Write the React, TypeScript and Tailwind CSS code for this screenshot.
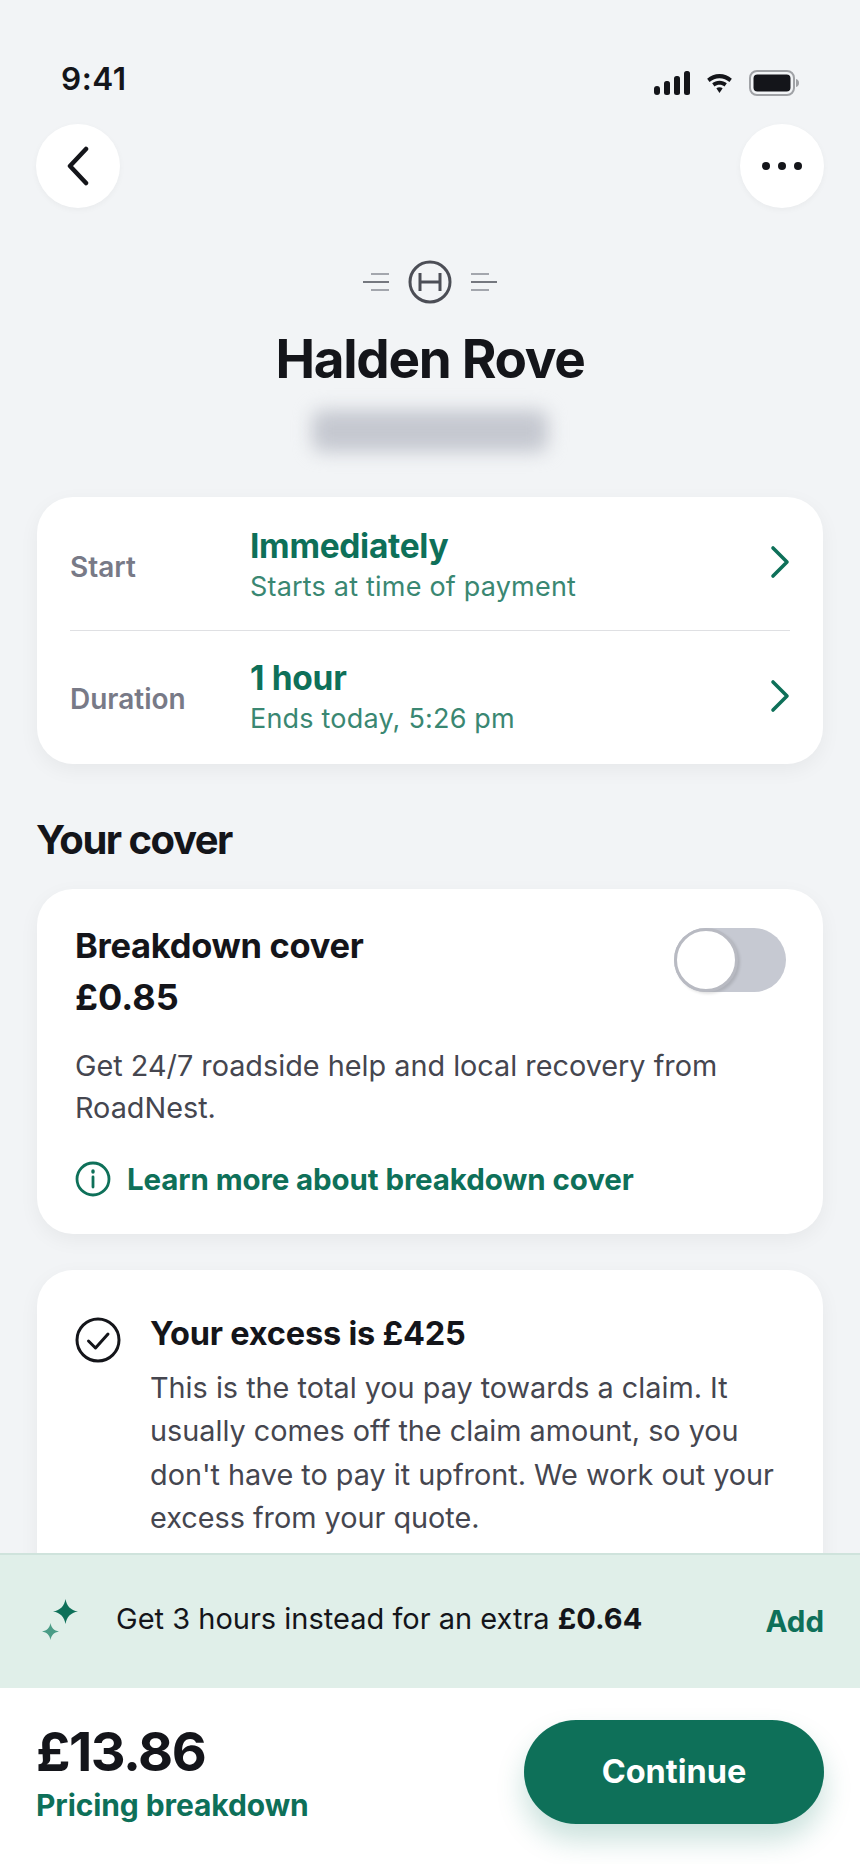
import React from "react";

const Chevron = () => (
  <svg width="20" height="34" viewBox="0 0 20 34" fill="none" className="mb-[4px] shrink-0">
    <path d="M3 3l14 14L3 31" stroke="#0e7059" strokeWidth="3.600" strokeLinecap="round" strokeLinejoin="round" />
  </svg>
);

const Sparkle = ({ size, color }: { size: number; color: string }) => (
  <svg width={size} height={size} viewBox="0 0 24 24" fill={color}>
    <path d="M12 0c1.200 6.800 4.800 10.800 12 12-7.200 1.200-10.800 5.200-12 12-1.200-6.800-4.800-10.800-12-12 7.200-1.200 10.800-5.200 12-12z" />
  </svg>
);

const Lines = ({ flip }: { flip?: boolean }) => (
  <svg width="26" height="20" viewBox="0 0 26 20" className={flip ? "-scale-x-100" : ""}>
    <path d="M8 2h18M8 18h18" stroke="#a3a6ad" strokeWidth="2" />
    <path d="M0 10h26" stroke="#75787f" strokeWidth="2" />
  </svg>
);

function Row({ label, title, sub, first }: { label: string; title: string; sub: string; first?: boolean }) {
  return (
    <div className="flex items-center h-[133px]">
      <div className={`w-[180px] shrink-0 text-[28px] font-semibold text-[#787a87] ${first ? "pt-[6px]" : "pt-[2px]"}`}>{label}</div>
      <div className={`flex-1 ${first ? "pt-[4px]" : ""}`}>
        <div className="text-[33.500px] leading-[40px] font-bold tracking-[-0.3px] text-[#0e7059]">{title}</div>
        <div className="mt-[1px] text-[27px] leading-[39px] tracking-[0.2px] text-[#3a8772]">{sub}</div>
      </div>
      <Chevron />
    </div>
  );
}

export default function App() {
  return (
    <div className="w-[860px] h-[1864px] flex flex-col overflow-hidden bg-[#f2f4f6] font-['Inter',sans-serif] text-[#14151a]">
      <div className="flex-1 min-h-0 overflow-hidden px-[37px]">
        <div className="flex items-start justify-between h-[124px] pl-[24px] pr-[24px] pt-[60px]">
          <div className="text-[31.500px] leading-[38px] font-semibold tracking-[0.5px]">9:41</div>
          <div className="flex items-center gap-[17px] pt-[10px]">
            <svg width="36" height="24" viewBox="0 0 36 24" fill="#14151a">
              <rect x="0" y="15" width="6" height="9" rx="3" />
              <rect x="10" y="10" width="6" height="14" rx="2.500" />
              <rect x="20" y="5" width="6" height="19" rx="2.500" />
              <rect x="30" y="0" width="6" height="24" rx="2.500" />
            </svg>
            <svg width="25" height="19" viewBox="0 0 26 20" fill="#14151a">
              <path d="M13 0c5 0 9.500 2 13 5l-2.500 3.500C20.500 6 17 4.500 13 4.500S5.500 6 2.500 8.500L0 5c3.500-3 8-5 13-5z" />
              <path d="M13 7c3 0 5.500 1 7.700 2.800l-2.400 3.400c-1.500-1.200-3.300-1.900-5.300-1.900s-3.800.7-5.300 1.900L5.300 9.800C7.500 8 10 7 13 7z" />
              <path d="M13 14c1.300 0 2.400.4 3.300 1.100L13 20l-3.300-4.900c.9-.7 2-1.100 3.300-1.100z" />
            </svg>
            <svg width="50" height="26" viewBox="0 0 50 26">
              <rect x="1" y="1" width="44" height="24" rx="7" fill="none" stroke="#a0a2a6" strokeWidth="2" />
              <rect x="4.500" y="4.500" width="37" height="17" rx="4" fill="#14151a" />
              <path d="M47 9c2 .5 3 2 3 4s-1 3.500-3 4z" fill="#a0a2a6" />
            </svg>
          </div>
        </div>

        <div className="-mx-[1px] flex items-center justify-between">
          <div className="flex h-[84px] w-[84px] items-center justify-center rounded-full bg-white shadow-[0_2px_6px_rgba(0,0,0,0.04)]">
            <svg width="24" height="40" viewBox="0 0 24 40" fill="none">
              <path d="M20 3L4 20l16 17" stroke="#14151a" strokeWidth="4.500" strokeLinecap="round" strokeLinejoin="round" />
            </svg>
          </div>
          <div className="flex h-[84px] w-[84px] items-center justify-center gap-[8px] rounded-full bg-white shadow-[0_2px_6px_rgba(0,0,0,0.04)]">
            <span className="h-[8px] w-[8px] rounded-full bg-[#14151a]" />
            <span className="h-[8px] w-[8px] rounded-full bg-[#14151a]" />
            <span className="h-[8px] w-[8px] rounded-full bg-[#14151a]" />
          </div>
        </div>

        <div className="mt-[52px] flex items-center justify-center gap-[19px]">
          <Lines />
          <svg width="44" height="44" viewBox="0 0 44 44" fill="none" stroke="#4c4e56" strokeWidth="3">
            <circle cx="22" cy="22" r="20" />
            <path d="M12 13v18M32 13v18M12 22h20" />
          </svg>
          <Lines flip />
        </div>

        <h1 className="mt-[24px] text-center text-[53px] leading-[62px] font-bold tracking-[-1.300px]">Halden Rove</h1>
        <div className="mx-auto mt-[20px] h-[42px] w-[236px] rounded-[10px] bg-[#c5c8d0] blur-[9px]" />

        <div className="mt-[45px] rounded-[36px] bg-white px-[33px] shadow-[0_6px_20px_rgba(0,0,0,0.05)]">
          <Row first label="Start" title="Immediately" sub="Starts at time of payment" />
          <div className="h-[1px] bg-[#dfe0e3]" />
          <Row label="Duration" title="1 hour" sub="Ends today, 5:26 pm" />
        </div>

        <h2 className="mt-[53px] -ml-[1px] text-[40px] leading-[46px] font-bold tracking-[-1.500px]">Your cover</h2>

        <div className="mt-[26px] rounded-[36px] bg-white px-[38px] pt-[33px] pb-[34px] shadow-[0_6px_20px_rgba(0,0,0,0.05)]">
          <div className="flex items-start justify-between">
            <div>
              <div className="text-[34.500px] leading-[48px] font-bold tracking-[-0.3px]">Breakdown cover</div>
              <div className="mt-[2px] text-[36px] leading-[50px] font-bold">£0.85</div>
            </div>
            <div className="mt-[6px] -mr-[1px] flex h-[64px] w-[112px] rounded-full bg-[#c6c9d2]">
              <div className="h-[64px] w-[64px] rounded-full border-[3px] border-[#b8bac2] bg-white shadow-[2px_2px_3px_rgba(0,0,0,0.12)]" />
            </div>
          </div>
          <p className="mt-[23px] text-[28.800px] leading-[42px] text-[#45464f]">
            Get 24/7 roadside help and local recovery from RoadNest.
          </p>
          <div className="mt-[29px] flex items-center gap-[16px]">
            <svg width="36" height="36" viewBox="0 0 36 36" fill="none" stroke="#0e7059" strokeWidth="2.800">
              <circle cx="18" cy="18" r="16" />
              <path d="M18 16v10" strokeLinecap="round" />
              <path d="M18 10v1" strokeLinecap="round" strokeWidth="3.400" />
            </svg>
            <span className="text-[29.500px] leading-[42px] font-bold tracking-[-0.1px] text-[#0e7059]">
              Learn more about breakdown cover
            </span>
          </div>
        </div>

        <div className="mt-[36px] flex gap-[30px] rounded-[36px] bg-white px-[38px] pt-[43px] pb-[80px] shadow-[0_6px_20px_rgba(0,0,0,0.05)]">
          <svg width="46" height="46" viewBox="0 0 46 46" fill="none" stroke="#14151a" strokeWidth="3" className="mt-[4px] shrink-0">
            <circle cx="23" cy="23" r="21" />
            <path d="M13.500 24l7 7L33 17" strokeLinecap="round" strokeLinejoin="round" />
          </svg>
          <div className="-ml-[1px]">
            <div className="text-[32.500px] leading-[42px] font-bold tracking-[-0.2px]">Your excess is £425</div>
            <p className="mt-[11px] text-[28.800px] leading-[43.300px] text-[#45464f]">
              This is the total you pay towards a claim. It usually comes off the claim amount, so you don't have to pay it upfront. We work out your excess from your quote.
            </p>
          </div>
        </div>
      </div>

      <div className="flex h-[135px] shrink-0 items-center border-t-2 border-[#cfe3dc] bg-[#e0efe9] pl-[42px] pr-[36px] pb-[6px]">
        <div className="mt-[8px] flex h-[48px] w-[36px] shrink-0 flex-col">
          <div className="self-end"><Sparkle size={25} color="#0e7059" /></div>
          <div className="-mt-[1px]"><Sparkle size={17} color="#4a9c86" /></div>
        </div>
        <div className="ml-[38px] flex-1 text-[29px] leading-[40px] text-[#14151a]">
          Get 3 hours instead for an extra <span className="font-bold">£0.64</span>
        </div>
        <div className="pt-[4px] text-[29.500px] leading-[40px] font-bold text-[#0e7059]">Add</div>
      </div>

      <div className="flex h-[176px] shrink-0 items-start justify-between bg-white px-[36px] pt-[32px]">
        <div>
          <div className="pt-[1px] text-[54px] leading-[62px] font-bold tracking-[-1.500px]">£13.86</div>
          <div className="mt-[2px] text-[30px] leading-[40px] font-bold tracking-[-0.1px] text-[#0e7059]">Pricing breakdown</div>
        </div>
        <div className="flex h-[104px] w-[300px] items-center justify-center rounded-full bg-[#0e7059] text-[32.500px] font-bold text-white shadow-[0_16px_28px_rgba(15,117,96,0.22)]">
          Continue
        </div>
      </div>
    </div>
  );
}
